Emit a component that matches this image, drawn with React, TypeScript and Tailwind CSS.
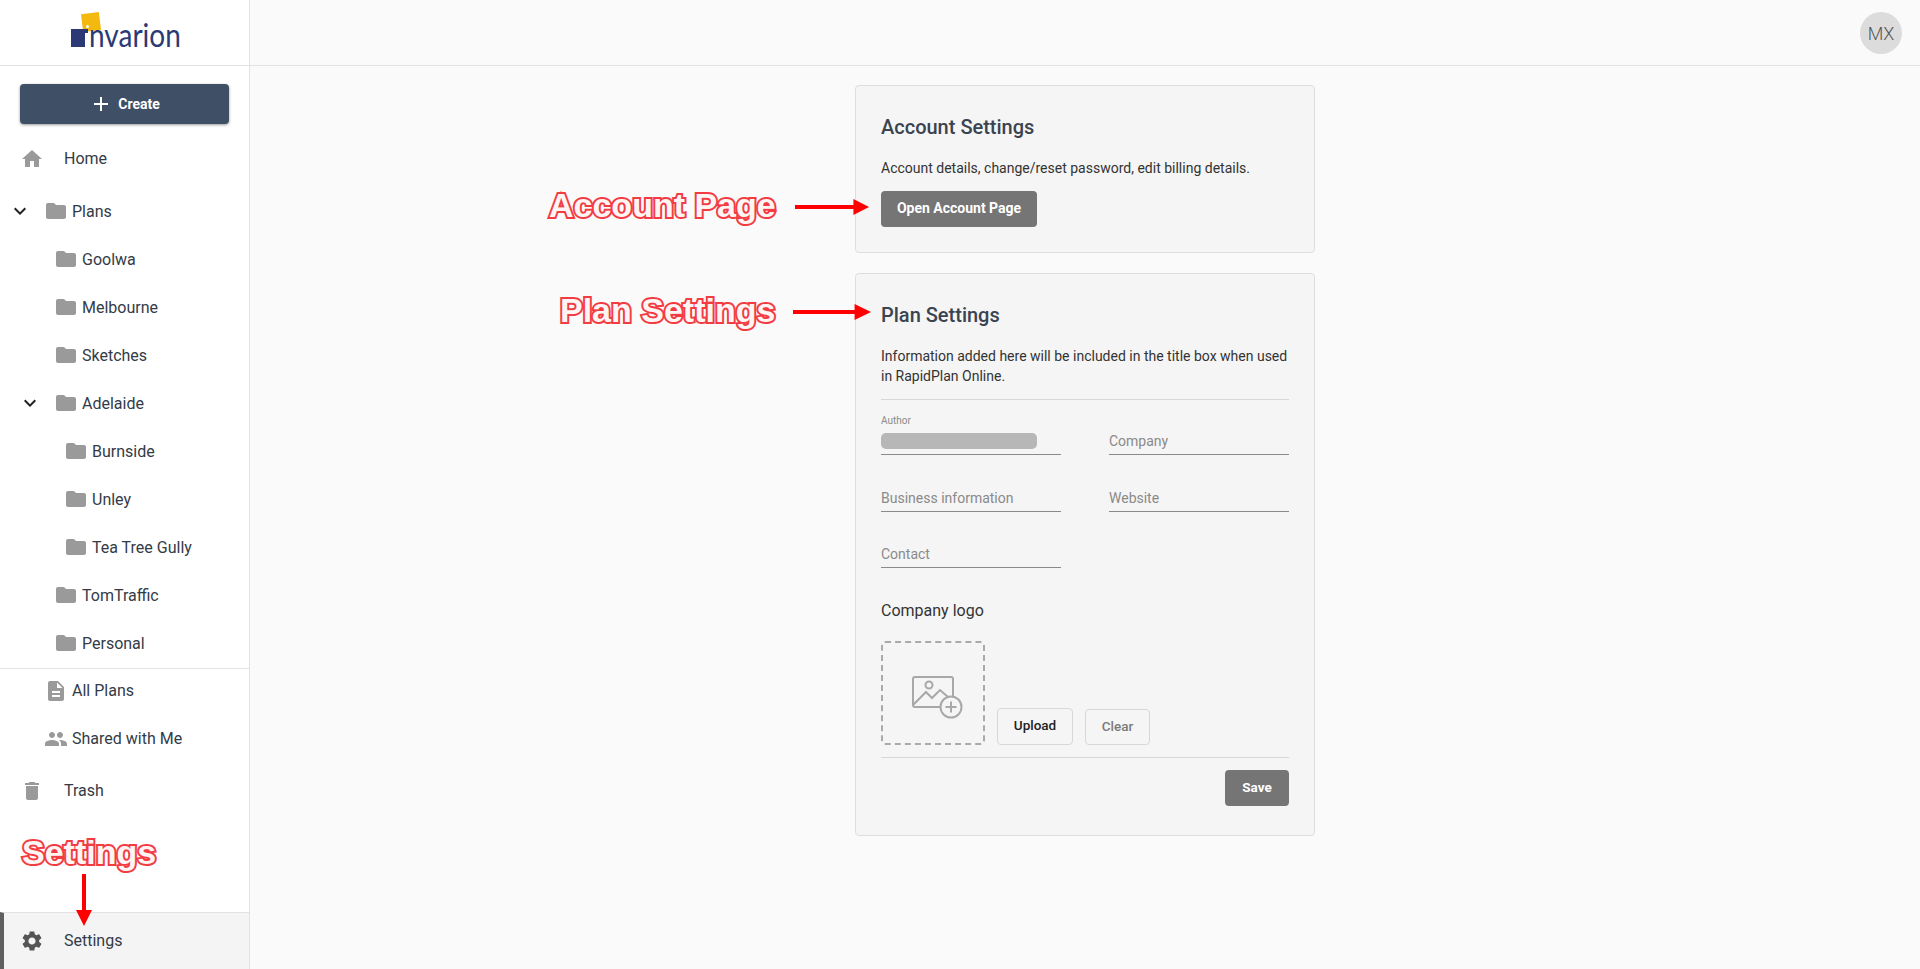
const ICONS = {
  home: "M10 20v-6h4v6h5v-8h3L12 3 2 12h3v8z",
  folder: "M10 4H4c-1.1 0-1.99.9-1.99 2L2 18c0 1.1.9 2 2 2h16c1.1 0 2-.9 2-2V8c0-1.1-.9-2-2-2h-8l-2-2z",
  chevron: "M16.59 8.59L12 13.17 7.41 8.59 6 10l6 6 6-6z",
  doc: "M14 2H6c-1.1 0-1.99.9-1.99 2L4 20c0 1.1.89 2 1.99 2H18c1.1 0 2-.9 2-2V8l-6-6zm2 16H8v-2h8v2zm0-4H8v-2h8v2zm-3-5V3.5L18.5 9H13z",
  people:
    "M16 11c1.66 0 2.99-1.34 2.99-3S17.66 5 16 5c-1.66 0-3 1.34-3 3s1.34 3 3 3zm-8 0c1.66 0 2.99-1.34 2.99-3S9.66 5 8 5C6.34 5 5 6.34 5 8s1.34 3 3 3zm0 2c-2.33 0-7 1.17-7 3.5V19h14v-2.5c0-2.33-4.67-3.5-7-3.5zm8 0c-.29 0-.62.02-.97.05 1.16.84 1.97 1.97 1.97 3.45V19h6v-2.5c0-2.33-4.67-3.5-7-3.5z",
  trash: "M6 19c0 1.1.9 2 2 2h8c1.1 0 2-.9 2-2V7H6v12zM19 4h-3.5l-1-1h-5l-1 1H5v2h14V4z",
  gear: "M19.14 12.94c.04-.3.06-.61.06-.94 0-.32-.02-.64-.07-.94l2.03-1.58c.18-.14.23-.41.12-.61l-1.92-3.32c-.12-.22-.37-.29-.59-.22l-2.39.96c-.5-.38-1.03-.7-1.62-.94l-.36-2.54c-.04-.24-.24-.41-.48-.41h-3.84c-.24 0-.43.17-.47.41l-.36 2.54c-.59.24-1.13.57-1.62.94l-2.39-.96c-.22-.08-.47 0-.59.22L2.74 8.87c-.12.21-.08.47.12.61l2.03 1.58c-.05.3-.09.63-.09.94s.02.64.07.94l-2.03 1.58c-.18.14-.23.41-.12.61l1.92 3.32c.12.22.37.29.59.22l2.39-.96c.5.38 1.03.7 1.62.94l.36 2.54c.05.24.24.41.48.41h3.84c.24 0 .44-.17.47-.41l.36-2.54c.59-.24 1.13-.56 1.62-.94l2.39.96c.22.08.47 0 .59-.22l1.92-3.32c.12-.22.07-.47-.12-.61l-2.01-1.58zM12 15.6c-1.98 0-3.6-1.62-3.6-3.6s1.62-3.6 3.6-3.6 3.6 1.62 3.6 3.6-1.62 3.6-3.6 3.6z",
  add: "M19 13h-6v6h-2v-6H5v-2h6V5h2v6h6v2z",
};

function Icon({ d, className }: { d: string; className: string }) {
  return (
    <svg viewBox="0 0 24 24" className={className} fill="currentColor">
      <path d={d} />
    </svg>
  );
}

function Logo() {
  return (
    <div className="relative w-[108px] h-[36px]">
      <div className="absolute left-[11px] top-[1px] w-[18px] h-[18px] bg-[#f4b90f] rotate-[-7deg]" />
      <div className="absolute left-[15px] top-[13px] size-[3px] rounded-full bg-white" />
      <div className="absolute left-0 top-[17px] w-[17px] h-[18px] bg-[#2b3a75]" />
      <div className="absolute left-[14px] top-[21px] w-[3px] h-[14px] bg-white" />
      <span className="absolute left-[18px] top-[8px] text-[28px] leading-[34px] text-[#2b3a75] scale-y-115 origin-bottom font-['Lato',sans-serif]">
        nvarion
      </span>
    </div>
  );
}

// one sidebar row, pad is the left offset of the row's content
function FolderRow({ label, pad, open }: { label: string; pad: string; open?: boolean }) {
  return (
    <div className={`h-12 flex items-center text-[#333b47] ${pad}`}>
      <div className="w-6 mr-[12px] flex justify-center">
        {open && <Icon d={ICONS.chevron} className="size-6 text-[#222]" />}
      </div>
      <Icon d={ICONS.folder} className="size-6 text-[#9a9a9a] mr-1" />
      <span className="text-base pt-px">{label}</span>
    </div>
  );
}

function TopRow({ label, icon }: { label: string; icon: string }) {
  return (
    <div className="h-12 flex items-center pl-5 text-base text-[#333b47]">
      <Icon d={icon} className="size-6 text-[#9a9a9a] mr-[20px]" />
      {label}
    </div>
  );
}

function Sidebar() {
  return (
    <aside className="w-[250px] shrink-0 flex flex-col bg-white border-r border-[#e2e2e2]">
      <div className="h-[66px] shrink-0 border-b border-[#e2e2e2] flex justify-center items-start pt-[12px] pl-[1px]">
        <Logo />
      </div>
      <div className="px-5 pt-[18px] pb-[11px]">
        <button className="w-full h-10 pb-px rounded bg-[#3f4f66] text-white text-sm font-bold flex items-center justify-center gap-[5px] shadow-[0_1px_3px_rgba(0,0,0,0.4)]">
          <Icon d={ICONS.add} className="size-6" />
          Create
        </button>
      </div>
      <TopRow label="Home" icon={ICONS.home} />
      <div className="mt-1 border-b border-[#e2e2e2] pb-[1px]">
        <FolderRow label="Plans" pad="pl-2" open />
        <FolderRow label="Goolwa" pad="pl-[18px]" />
        <FolderRow label="Melbourne" pad="pl-[18px]" />
        <FolderRow label="Sketches" pad="pl-[18px]" />
        <FolderRow label="Adelaide" pad="pl-[18px]" open />
        <FolderRow label="Burnside" pad="pl-[28px]" />
        <FolderRow label="Unley" pad="pl-[28px]" />
        <FolderRow label="Tea Tree Gully" pad="pl-[28px]" />
        <FolderRow label="TomTraffic" pad="pl-[18px]" />
        <FolderRow label="Personal" pad="pl-[18px]" />
      </div>
      <div className="-mt-[2px] h-12 flex items-center pl-[44px] text-base text-[#333b47]">
        <Icon d={ICONS.doc} className="size-6 text-[#9a9a9a] mr-1" />
        All Plans
      </div>
      <div className="h-12 flex items-center pl-[44px] text-base text-[#333b47]">
        <Icon d={ICONS.people} className="size-6 text-[#9a9a9a] mr-1" />
        Shared with Me
      </div>
      <div className="mt-1">
        <TopRow label="Trash" icon={ICONS.trash} />
      </div>
      <div className="mt-auto h-[57px] flex items-center pl-[20px] bg-[#f4f4f4] border-t border-[#e2e2e2] border-l-4 border-l-[#5f5f5f] text-base text-[#333b47]">
        <Icon d={ICONS.gear} className="size-6 text-[#555] -ml-[4px] mr-[20px]" />
        Settings
      </div>
    </aside>
  );
}

function Field({ label, className }: { label: string; className?: string }) {
  return (
    <div className={`h-[26px] border-b border-[#8a8a8a] text-sm text-[#8a8a8a] flex items-center pb-[2px] ${className ?? ""}`}>
      {label}
    </div>
  );
}

function Card({ title, children }: { title: string; children: React.ReactNode }) {
  return (
    <section className="w-[460px] bg-[#f5f5f5] border border-[#dedede] rounded px-[25px] pt-[28px] pb-[25px]">
      <h2 className="text-[20px] leading-[26px] font-medium text-[#3a4350]">{title}</h2>
      {children}
    </section>
  );
}

function LogoPlaceholder() {
  return (
    <svg viewBox="0 0 51 43" className="w-[51px] h-[43px] text-[#a8a8a8]" fill="none" stroke="currentColor" strokeWidth="2">
      <path d="M28 31H3a2 2 0 0 1-2-2V3a2 2 0 0 1 2-2h36a2 2 0 0 1 2 2v17" />
      <circle cx="17" cy="9" r="3.5" />
      <path d="M1 29l13-13 6 6 8-8 8 7" />
      <circle cx="39" cy="31" r="10.5" />
      <path d="M39 25.5v11M33.5 31h11" />
    </svg>
  );
}

export default function App() {
  return (
    <div className="relative flex h-screen overflow-hidden bg-[#fafafa] font-['Roboto',sans-serif]">
      <Sidebar />
      <div className="flex-1 flex flex-col min-w-0">
        <header className="h-[66px] shrink-0 border-b border-[#e2e2e2] flex items-start justify-end pt-3 pr-[18px]">
          <div className="size-[42px] rounded-full bg-[#dcdcdc] text-[#555] text-[18px] font-light flex items-center justify-center">
            MX
          </div>
        </header>
        <main className="flex flex-col items-center pt-[19px] gap-5">
          <Card title="Account Settings">
            <p className="mt-[18px] text-sm leading-5 text-[#333]">
              Account details, change/reset password, edit billing details.
            </p>
            <button className="mt-[13px] h-9 pb-[2px] w-[156px] rounded bg-[#757575] text-white text-sm font-bold">
              Open Account Page
            </button>
          </Card>
          <Card title="Plan Settings">
            <p className="mt-[18px] text-sm leading-5 text-[#333] pb-[13px] border-b border-[#d8d8d8]">
              Information added here will be included in the title box when used in RapidPlan Online.
            </p>
            <div className="mt-[15px] grid grid-cols-2 gap-x-12 w-[408px]">
              <div>
                <label className="block text-[10px] leading-3 text-[#8a8a8a]">Author</label>
                <div className="h-[28px] border-b border-[#8a8a8a] pt-[6px]">
                  <div className="h-4 w-[156px] rounded-[5px] bg-[#b7b7b7]" />
                </div>
              </div>
              <Field label="Company" className="mt-[14px]" />
              <Field label="Business information" className="mt-[31px]" />
              <Field label="Website" className="mt-[31px]" />
              <Field label="Contact" className="mt-[30px]" />
            </div>
            <h3 className="mt-[33px] text-base leading-5 text-[#333]">Company logo</h3>
            <div className="mt-5 flex items-end">
              <div className="w-[104px] h-[104px] pl-2 pt-2 rounded border-2 border-dashed border-[#aaaaaa] flex items-center justify-center">
                <LogoPlaceholder />
              </div>
              <button className="ml-3 w-[76px] h-[37px] pb-[2px] rounded border border-[#d8d8d8] text-[13.5px] font-medium text-[#222]">
                Upload
              </button>
              <button className="ml-3 w-[65px] h-[36px] pb-px rounded border border-[#d8d8d8] text-[13.5px] font-medium text-[#7a7a7a]">
                Clear
              </button>
            </div>
            <div className="mt-3 border-t border-[#d8d8d8] pt-3 pb-1 flex justify-end">
              <button className="w-16 h-9 pb-[2px] rounded bg-[#757575] text-white text-[13.5px] font-bold">Save</button>
            </div>
          </Card>
        </main>
      </div>

      {/* annotations laid over the screenshot */}
      <Annotation text="Account Page" className="left-[549px] top-[185px]" />
      <Annotation text="Plan Settings" className="left-[560px] top-[290px]" />
      <Annotation text="Settings" className="left-[22px] top-[832px]" />
      <ArrowRight className="left-[795px] top-[199px] w-[74px]" />
      <ArrowRight className="left-[793px] top-[304px] w-[78px]" />
      <svg viewBox="0 0 16 52" className="absolute left-[76px] top-[874px] w-4 h-[52px] text-[#f00]" fill="currentColor">
        <path d="M6 0h4v36h6L8 52 0 36h6z" />
      </svg>
    </div>
  );
}

function Annotation({ text, className }: { text: string; className: string }) {
  return (
    <span
      className={`absolute text-[34px] leading-10 font-bold text-[#fdf4f4] font-['Liberation_Sans',sans-serif] [-webkit-text-stroke:4px_#f33b42] [paint-order:stroke_fill] ${className}`}
    >
      {text}
    </span>
  );
}

function ArrowRight({ className }: { className: string }) {
  return (
    <svg viewBox="0 0 76 16" preserveAspectRatio="none" className={`absolute h-4 text-[#f00] ${className}`} fill="currentColor">
      <path d="M0 6h60V0l16 8-16 8v-6H0z" />
    </svg>
  );
}
